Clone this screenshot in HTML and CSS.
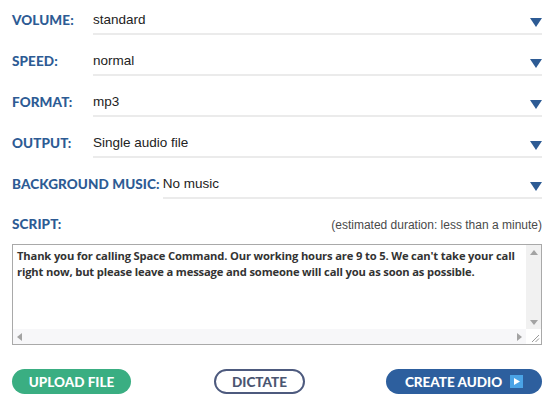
FILE: index.html
```html
<!DOCTYPE html>
<html>
<head>
<meta charset="utf-8">
<link rel="stylesheet" href="styles.css">
</head>
<body>
<div class="form">
  <div class="row">
    <div class="label">VOLUME:</div>
    <div class="select"><span class="val">standard</span><span class="arrow"></span></div>
  </div>
  <div class="row">
    <div class="label">SPEED:</div>
    <div class="select"><span class="val">normal</span><span class="arrow"></span></div>
  </div>
  <div class="row">
    <div class="label">FORMAT:</div>
    <div class="select"><span class="val">mp3</span><span class="arrow"></span></div>
  </div>
  <div class="row">
    <div class="label">OUTPUT:</div>
    <div class="select"><span class="val">Single audio file</span><span class="arrow"></span></div>
  </div>
  <div class="row">
    <div class="label wide">BACKGROUND MUSIC:</div>
    <div class="select"><span class="val">No music</span><span class="arrow"></span></div>
  </div>
  <div class="script-head">
    <div class="label">SCRIPT:</div>
    <div class="estimate">(estimated duration: less than a minute)</div>
  </div>
  <div class="textbox">
    <div class="text">Thank you for calling Space Command. Our working hours are 9 to 5. We can't take your call right now, but please leave a message and someone will call you as soon as possible.</div>
    <div class="vbar"><span class="tri up"></span><span class="tri down"></span></div>
    <div class="hbar"><span class="tri left"></span><span class="tri right"></span></div>
    <div class="corner"><svg width="15" height="15" viewBox="0 0 15 15"><path d="M6 13 L13 6 M9.5 13 L13 9.5" stroke="#999" stroke-width="1"/></svg></div>
  </div>
  <div class="buttons">
    <div class="btn upload">UPLOAD FILE</div>
    <div class="btn dictate">DICTATE</div>
    <div class="btn create">CREATE AUDIO <span class="play"><svg width="13" height="13" viewBox="0 0 13 13"><rect width="13" height="13" fill="#4aa3e6"/><path d="M4 3 L10 6.5 L4 10 Z" fill="#fff"/></svg></span></div>
  </div>
</div>
</body>
</html>
```
FILE: styles.css
```css
* { box-sizing: border-box; }
body {
  margin: 0;
  background: #fff;
  font-family: "Liberation Sans", Arial, sans-serif;
}
.form {
  padding: 0 13px 0 12px;
  width: 555px;
}
.row {
  display: flex;
  align-items: flex-start;
  height: 41px;
}
.label {
  font-family: Lato, "Noto Sans", sans-serif;
  font-weight: 900;
  font-size: 13.5px;
  color: #2d5b94;
  width: 81px;
  flex: none;
  padding-top: 12px;
  letter-spacing: 0.1px;
}
.label.wide { width: auto; padding-right: 3px; }
.select {
  flex: 1;
  display: flex;
  justify-content: space-between;
  height: 35px;
  border-bottom: 2px solid #ebebeb;
  padding-top: 12px;
}
.val {
  font-size: 13.5px;
  color: #222;
}
.arrow {
  width: 0;
  height: 0;
  border-left: 6px solid transparent;
  border-right: 6px solid transparent;
  border-top: 9px solid #2d5b94;
  margin-top: 6px;
}
.script-head {
  display: flex;
  justify-content: space-between;
  align-items: baseline;
  height: 38px;
}
.script-head .label { padding-top: 11px; }
.estimate {
  font-family: "Liberation Sans", Arial, sans-serif;
  font-size: 12px;
  color: #4a4a4a;
}
.textbox {
  display: grid;
  grid-template-columns: 1fr 15px;
  grid-template-rows: 84px 15px;
  width: 530px;
  height: 101px;
  border: 1px solid #a9a9a9;
  margin-top: 1px;
}
.text {
  font-family: "Open Sans", sans-serif;
  font-weight: 700;
  font-size: 11.2px;
  letter-spacing: -0.15px;
  line-height: 16px;
  color: #333;
  padding: 3px 4px;
}
.vbar {
  background: #f1f1f1;
  display: flex;
  flex-direction: column;
  justify-content: space-between;
  align-items: center;
  padding: 5px 0 4px;
}
.hbar {
  background: #f7f7f9;
  display: flex;
  justify-content: space-between;
  align-items: center;
  padding: 0 4px 0 4px;
}
.corner { background: #fff; }
.tri { width: 0; height: 0; }
.tri.up { border-left: 4px solid transparent; border-right: 4px solid transparent; border-bottom: 5px solid #a3a3a3; }
.tri.down { border-left: 4px solid transparent; border-right: 4px solid transparent; border-top: 5px solid #a3a3a3; }
.tri.left { border-top: 4px solid transparent; border-bottom: 4px solid transparent; border-right: 5px solid #a3a3a3; }
.tri.right { border-top: 4px solid transparent; border-bottom: 4px solid transparent; border-left: 5px solid #a3a3a3; }
.buttons {
  display: flex;
  justify-content: space-between;
  margin-top: 24px;
}
.btn {
  height: 25px;
  border-radius: 13px;
  font-family: Lato, sans-serif;
  font-weight: 900;
  font-size: 13.5px;
  display: flex;
  align-items: center;
  justify-content: center;
  gap: 8px;
}
.upload { width: 119px; background: #3aae82; color: #fff; }
.dictate { width: 91px; border: 2px solid #4d5a7e; color: #4a5571; margin-left: 83px; }
.create { width: 156px; background: #2d5f9e; color: #fff; margin-left: auto; }
.play { display: flex; }
```
